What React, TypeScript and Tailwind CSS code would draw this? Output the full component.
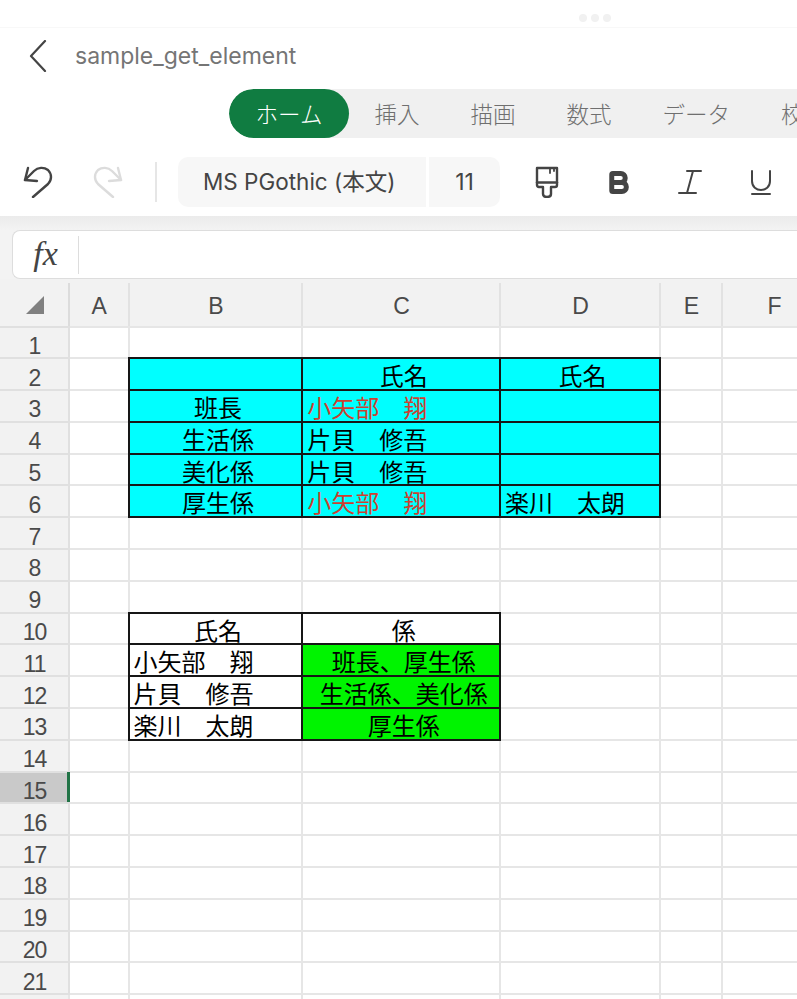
import React from 'react';
import { Bold } from 'lucide-react';

const sans = 'font-["Liberation_Sans","Noto_Sans_CJK_JP",sans-serif]';
const ui = 'font-["Inter","Noto_Sans_CJK_JP",sans-serif]';
const cjk = 'font-["Noto_Sans_CJK_JP",sans-serif]';

type Cell = { text?: string; fill: string; red?: boolean; left?: boolean };

const cyan = 'bg-[#00ffff]';
const green = 'bg-[#00f400]';
const white = 'bg-white';

const cells: Record<string, Cell> = {
  B2: { fill: cyan },
  C2: { text: '氏名', fill: cyan },
  D2: { text: '氏名', fill: cyan },
  B3: { text: '班長', fill: cyan },
  C3: { text: '小矢部　翔', fill: cyan, red: true, left: true },
  D3: { fill: cyan },
  B4: { text: '生活係', fill: cyan },
  C4: { text: '片貝　修吾', fill: cyan, left: true },
  D4: { fill: cyan },
  B5: { text: '美化係', fill: cyan },
  C5: { text: '片貝　修吾', fill: cyan, left: true },
  D5: { fill: cyan },
  B6: { text: '厚生係', fill: cyan },
  C6: { text: '小矢部　翔', fill: cyan, red: true, left: true },
  D6: { text: '楽川　太朗', fill: cyan, left: true },
  B10: { text: '氏名', fill: white },
  C10: { text: '係', fill: white },
  B11: { text: '小矢部　翔', fill: white, left: true },
  C11: { text: '班長、厚生係', fill: green },
  B12: { text: '片貝　修吾', fill: white, left: true },
  C12: { text: '生活係、美化係', fill: green },
  B13: { text: '楽川　太朗', fill: white, left: true },
  C13: { text: '厚生係', fill: green },
};

const columns = ['A', 'B', 'C', 'D', 'E', 'F'];
const rows = Array.from({ length: 21 }, (_, i) => i + 1);
const gridCols = 'grid grid-cols-[69px_59.5px_173.8px_197.7px_160px_62px_102px]';
const tabs = ['挿入', '描画', '数式', 'データ', '校閲'];

function UndoIcon({ className }: { className: string }) {
  return (
    <svg viewBox="0 0 30 32" fill="none" stroke="currentColor" strokeWidth="2.4" strokeLinecap="round" strokeLinejoin="round" className={className}>
      <path d="M5 2 L2 14 L14 15" />
      <path d="M2 14 L11 5 C15 1 21 1 25 4 C29 8 29 14 25 18 L10 31" />
    </svg>
  );
}

function Sheet() {
  return (
    <div className="bg-white">
      {rows.map((row) => (
        <div key={row} className={`${gridCols} grid-rows-[31.8px]`}>
          <div className={`${row === 15 ? 'bg-[#c9c9c9]' : 'bg-[#f2f2f2]'} relative -ml-[3px] flex items-center justify-center pl-[3px] pt-[8px] ${sans} text-[23px] leading-none tracking-[-1px] text-[#4a4a4a] outline-2 outline-offset-[-1px] outline-[#e0e0e0]`}>
            {row}
            {row === 15 && <span className="absolute right-[-1px] top-0 bottom-0 w-[3px] bg-[#217346]" />}
          </div>
          {columns.map((col) => {
            const cell = cells[`${col}${row}`];
            if (!cell) {
              return <div key={col} className="outline-2 outline-offset-[-1px] outline-[#e6e6e6]" />;
            }
            return (
              <div
                key={col}
                className={`relative z-10 flex items-center ${cell.fill} ${cell.left ? 'pl-[5px]' : 'justify-center pl-[5px]'} pt-[2px] ${cjk} text-[24px] leading-none whitespace-nowrap ${cell.red ? 'text-[#cc3f30]' : 'text-black'} outline-2 outline-offset-[-1px] outline-[#161616]`}
              >
                {cell.text}
              </div>
            );
          })}
        </div>
      ))}
      {/* row 22 only peeks in at the bottom edge */}
      <div className={`${gridCols} grid-rows-[31.8px]`}>
        <div className="-ml-[3px] bg-[#f2f2f2] outline-2 outline-offset-[-1px] outline-[#e0e0e0]" />
        {columns.map((col) => (
          <div key={col} className="outline-2 outline-offset-[-1px] outline-[#e6e6e6]" />
        ))}
      </div>
    </div>
  );
}

export default function App() {
  return (
    <div className="h-[999px] w-[797px] overflow-hidden bg-white">
      {/* window handle */}
      <div className="flex h-[28px] items-center justify-center gap-[4px] border-b border-[#f8f8f8] pl-[393px] pt-[8px]">
        <span className="h-[8px] w-[8px] rounded-full bg-[#f1f1f1]" />
        <span className="h-[8px] w-[8px] rounded-full bg-[#f1f1f1]" />
        <span className="h-[8px] w-[8px] rounded-full bg-[#f1f1f1]" />
      </div>

      {/* title */}
      <div className="flex h-[56px] items-center pl-[29px]">
        <svg viewBox="0 0 18 32" fill="none" stroke="#444444" strokeWidth="2.2" strokeLinecap="round" strokeLinejoin="round" className="h-[32px] w-[18px]">
          <path d="M16 1 L2 16 L16 31" />
        </svg>
        <span className={`ml-[28px] ${ui} text-[23px] text-[#757575]`}>sample_get_element</span>
      </div>

      {/* ribbon tabs */}
      <div className={`ml-[229px] mt-[5px] flex h-[49px] items-center overflow-hidden rounded-l-full bg-[#f0f0f0] ${cjk} text-[22.5px] font-light text-[#6f6f6f]`}>
        <div className="flex h-full w-[120px] shrink-0 items-center justify-center rounded-full bg-[#107c41] whitespace-nowrap text-white">ホーム</div>
        {tabs.map((tab) => (
          <span key={tab} className="shrink-0 whitespace-nowrap px-[25.5px]">{tab}</span>
        ))}
      </div>

      {/* toolbar */}
      <div className="mt-[19px] flex h-[50px] items-center">
        <UndoIcon className="ml-[23px] h-[32px] w-[30px] text-[#444444]" />
        <UndoIcon className="ml-[40px] h-[32px] w-[30px] -scale-x-100 text-[#dcdcdc]" />
        <div className="ml-[32px] h-[40px] w-[2px] bg-[#e6e6e6]" />
        <div className={`ml-[21px] flex h-full w-[248px] items-center rounded-l-[10px] bg-[#f7f7f7] pl-[25px] ${ui} text-[22.5px] text-[#444444]`}>
          MS PGothic (本文)
        </div>
        <div className={`ml-[3px] flex h-full w-[71px] items-center justify-center rounded-r-[10px] bg-[#f7f7f7] ${ui} text-[23px] text-[#444444]`}>
          11
        </div>
        <svg viewBox="0 0 24 32" fill="none" stroke="#444444" strokeWidth="2.4" strokeLinecap="round" strokeLinejoin="round" className="ml-[35px] h-[32px] w-[24px]">
          <path d="M2 2 H22 V19 Q22 21 20 21 H16 V28 Q16 31 12 31 Q8 31 8 28 V21 H4 Q2 21 2 19 Z" />
          <path d="M2 16.5 H22" />
          <path d="M15 2 V7 M19 2 V5" strokeWidth="1.8" />
        </svg>
        <Bold size={27} strokeWidth={4.4} className="ml-[46px] text-[#444444]" />
        <svg viewBox="0 0 26 26" fill="none" stroke="#444444" strokeWidth="2" strokeLinecap="round" className="ml-[45px] h-[26px] w-[26px]">
          <path d="M10 2 H24 M16 2 L10 24 M2 24 H19" />
        </svg>
        <svg viewBox="0 0 22 26" fill="none" stroke="#444444" strokeWidth="2" strokeLinecap="round" className="ml-[47px] h-[26px] w-[22px]">
          <path d="M2 2 V12 C2 24 20 24 20 12 V2 M2 25 H20" />
        </svg>
      </div>

      {/* formula bar */}
      <div className="mt-[9px] h-[14px] bg-gradient-to-b from-[#ebebeb] to-[#f3f3f3]" />
      <div className="flex h-[49px] bg-[#f3f3f3] pl-[12px]">
        <div className="flex flex-1 items-center rounded-l-[8px] border border-r-0 border-[#dddddd] bg-white">
          <span className={`flex w-[65px] justify-center pb-[2px] font-["Liberation_Serif",serif] text-[34px] leading-none italic text-[#444444]`}>fx</span>
          <div className="h-[38px] w-px bg-[#dddddd]" />
        </div>
      </div>

      {/* column headers */}
      <div className={`${gridCols} h-[47.5px] bg-[#f2f2f2] pt-[4px] ${sans} text-[23px] leading-none text-[#4a4a4a]`}>
        <div className="-mr-px flex items-center justify-center border-r-2 border-[#dcdcdc] pl-[2px]">
          <span className="h-0 w-0 border-b-[18px] border-l-[18px] border-b-[#808080] border-l-transparent" />
        </div>
        {columns.map((col) => (
          <div key={col} className="-mr-px flex items-center justify-center border-r-2 border-[#e2e2e2] pl-[2px] pt-[3px] last:border-r-0">{col}</div>
        ))}
      </div>

      <Sheet />
    </div>
  );
}
